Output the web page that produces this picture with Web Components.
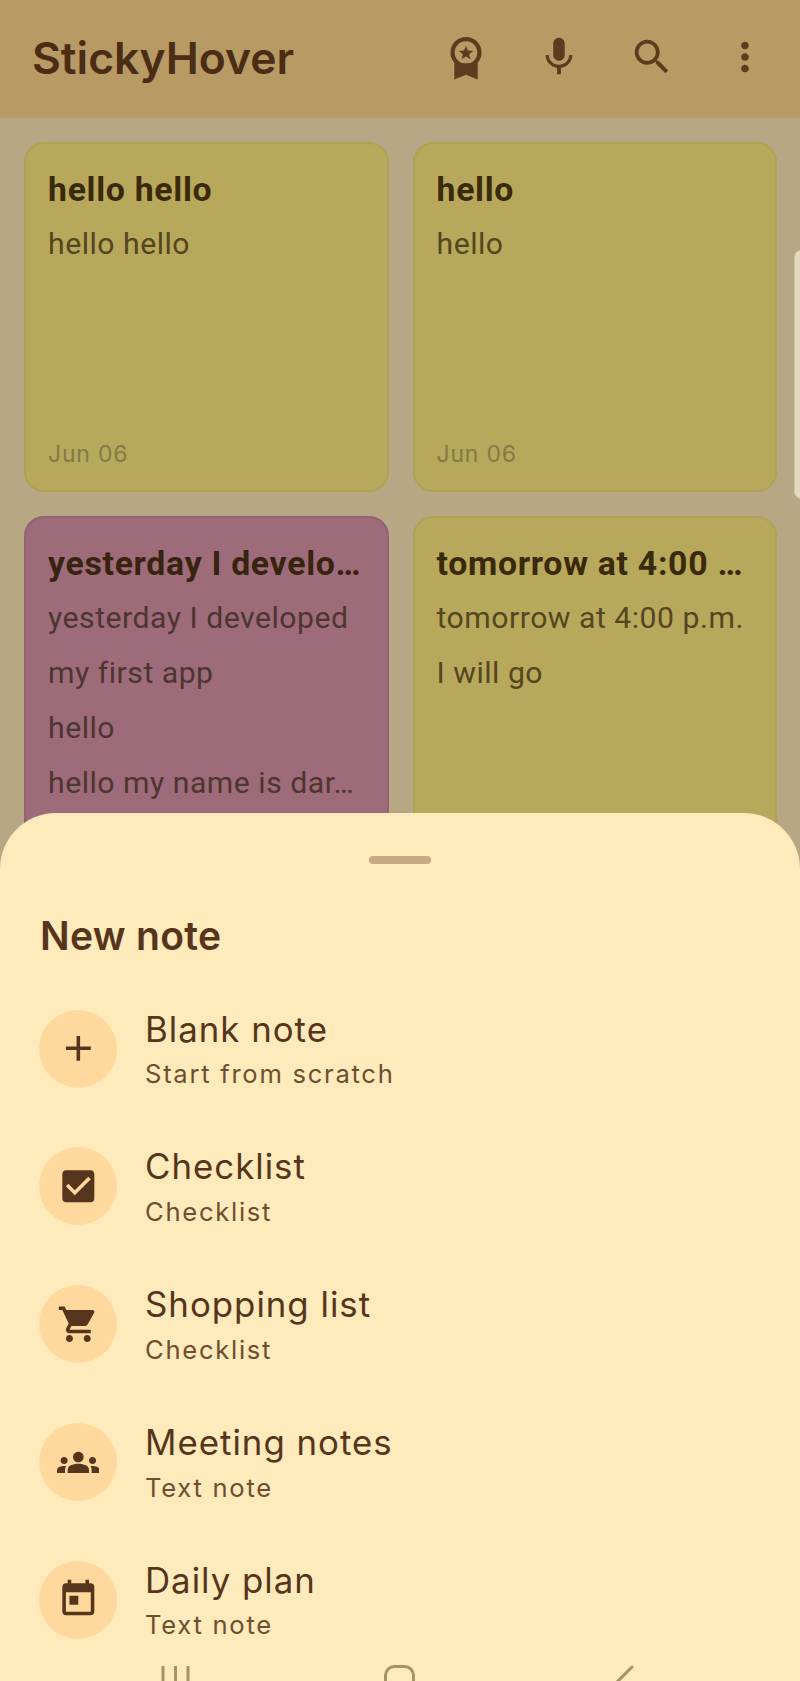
<!DOCTYPE html>
<html><head><meta charset="utf-8">
<style>html,body{margin:0;padding:0;background:#B7A784}</style>
</head><body>
<sticky-app>
  <top-bar slot="bar" title-text="StickyHover"></top-bar>
  <note-grid slot="content">
    <note-card title-text="hello hello" date="Jun 06"><div>hello hello</div></note-card>
    <note-card title-text="hello" date="Jun 06"><div>hello</div></note-card>
    <note-card tone="pink" title-text="yesterday I develo…"><div>yesterday I developed</div><div>my first app</div><div>hello</div><div>hello my name is dar…</div></note-card>
    <note-card title-text="tomorrow at 4:00 …"><div>tomorrow at 4:00 p.m.</div><div>I will go</div></note-card>
  </note-grid>
  <new-note-sheet slot="sheet" heading="New note">
    <sheet-item icon="add" label="Blank note" sub="Start from scratch"></sheet-item>
    <sheet-item icon="check" label="Checklist" sub="Checklist"></sheet-item>
    <sheet-item icon="cart" label="Shopping list" sub="Checklist"></sheet-item>
    <sheet-item icon="groups" label="Meeting notes" sub="Text note"></sheet-item>
    <sheet-item icon="today" label="Daily plan" sub="Text note"></sheet-item>
  </new-note-sheet>
  <nav-hint slot="nav"></nav-hint>
</sticky-app>
<script>
const ICONS={
 mic:'<path d="M12 14c1.66 0 2.99-1.34 2.99-3L15 5c0-1.66-1.34-3-3-3S9 3.34 9 5v6c0 1.66 1.34 3 3 3zm5.3-3c0 3-2.54 5.1-5.3 5.1S6.7 14 6.7 11H5c0 3.41 2.72 6.23 6 6.72V21h2v-3.28c3.28-.48 6-3.3 6-6.72h-1.7z"/>',
 search:'<path d="M15.5 14h-.79l-.28-.27C15.41 12.59 16 11.11 16 9.5 16 5.91 13.09 3 9.5 3S3 5.91 3 9.5 5.91 16 9.5 16c1.61 0 3.09-.59 4.23-1.57l.27.28v.79l5 4.99L20.49 19l-4.99-5zm-6 0C7.01 14 5 11.99 5 9.5S7.01 5 9.5 5 14 7.01 14 9.5 11.99 14 9.5 14z"/>',
 more:'<path d="M12 8c1.1 0 2-.9 2-2s-.9-2-2-2-2 .9-2 2 .9 2 2 2zm0 2c-1.1 0-2 .9-2 2s.9 2 2 2 2-.9 2-2-.9-2-2-2zm0 6c-1.1 0-2 .9-2 2s.9 2 2 2 2-.9 2-2-.9-2-2-2z"/>',
 add:'<path d="M19 13h-6v6h-2v-6H5v-2h6V5h2v6h6v2z"/>',
 check:'<path d="M19 3H5c-1.11 0-2 .9-2 2v14c0 1.1.89 2 2 2h14c1.11 0 2-.9 2-2V5c0-1.1-.89-2-2-2zm-9 14l-5-5 1.41-1.41L10 14.17l7.59-7.59L19 8l-9 9z"/>',
 cart:'<path d="M7 18c-1.1 0-1.99.9-1.99 2S5.9 22 7 22s2-.9 2-2-.9-2-2-2zM1 2v2h2l3.6 7.59-1.35 2.45c-.16.28-.25.61-.25.96 0 1.1.9 2 2 2h12v-2H7.42c-.14 0-.25-.11-.25-.25l.03-.12.9-1.63h7.45c.75 0 1.41-.41 1.75-1.03l3.58-6.49c.08-.14.12-.31.12-.48 0-.55-.45-1-1-1H5.21l-.94-2H1zm16 16c-1.1 0-1.99.9-1.99 2s.89 2 1.99 2 2-.9 2-2-.9-2-2-2z"/>',
 groups:'<path d="M12 12.75c1.63 0 3.07.39 4.24.9 1.08.48 1.76 1.56 1.76 2.73V18H6v-1.61c0-1.18.68-2.26 1.76-2.73 1.17-.52 2.61-.91 4.24-.91zM4 13c1.1 0 2-.9 2-2s-.9-2-2-2-2 .9-2 2 .9 2 2 2zm1.13 1.1c-.37-.06-.74-.1-1.13-.1-.99 0-1.93.21-2.78.58C.48 14.9 0 15.62 0 16.43V18h4.5v-1.61c0-.83.23-1.61.63-2.29zM20 13c1.1 0 2-.9 2-2s-.9-2-2-2-2 .9-2 2 .9 2 2 2zm4 3.43c0-.81-.48-1.53-1.22-1.85-.85-.37-1.79-.58-2.78-.58-.39 0-.76.04-1.13.1.4.68.63 1.46.63 2.29V18H24v-1.57zM12 6c1.66 0 3 1.34 3 3s-1.34 3-3 3-3-1.34-3-3 1.34-3 3-3z"/>',
 today:'<path d="M19 3h-1V1h-2v2H8V1H6v2H5c-1.11 0-1.99.9-1.99 2L3 19c0 1.1.89 2 2 2h14c1.1 0 2-.9 2-2V5c0-1.1-.9-2-2-2zm0 16H5V8h14v11zM7 10h5v5H7z"/>',
 badge:'<path fill-rule="evenodd" d="M12 1.6a8.1 8.1 0 1 1 0 16.2 8.1 8.1 0 0 1 0-16.2zm0 2.2a5.9 5.9 0 1 0 0 11.8 5.9 5.9 0 0 0 0-11.8z"/><path d="M12 6.1l1 2.55 2.75.17-2.13 1.75.7 2.66L12 11.75l-2.32 1.48.7-2.66-2.13-1.75L11 8.65z"/><path d="M5.9 15.2h12.2v8.6L12 21.2l-6.1 2.6z"/>'
};
class UiIcon extends HTMLElement{
  connectedCallback(){
    const s=this.attachShadow({mode:'open'});
    s.innerHTML=`<style>:host{display:block;width:var(--icon,46px);height:var(--icon,46px);line-height:0}svg{width:100%;height:100%;fill:currentColor;display:block}</style><svg viewBox="0 0 24 24">${ICONS[this.getAttribute('name')]}</svg>`;
  }
}
customElements.define('ui-icon',UiIcon);

class StickyApp extends HTMLElement{
  constructor(){super();this.attachShadow({mode:'open'}).innerHTML=`<style>
  :host{display:block;position:relative;width:800px;height:1681px;overflow:hidden;background:#B7A784}
  .edge{position:absolute;top:250px;right:-8px;width:14px;height:249px;border:1px solid #CFC4A0;border-radius:8px;background:#E2D9C1;box-sizing:border-box}
  </style><slot name="bar"></slot><slot name="content"></slot><div class="edge"></div><slot name="sheet"></slot><slot name="nav"></slot>`;}
}
customElements.define('sticky-app',StickyApp);

class TopBar extends HTMLElement{
  connectedCallback(){
    const s=this.attachShadow({mode:'open'});
    s.innerHTML=`<style>
    :host{display:flex;align-items:center;height:118px;background:#B89A65;color:#5E3B1F;padding:0 9px 4px 32px;box-sizing:border-box}
    h1{margin:2px 0 0;flex:1;font:600 44.4px/1 Inter,sans-serif;color:#4A2D14}
    .btn{width:93px;display:flex;justify-content:center}
    </style><h1>${this.getAttribute('title-text')}</h1>
    <div class="btn"><ui-icon name="badge"></ui-icon></div><div class="btn"><ui-icon name="mic"></ui-icon></div><div class="btn"><ui-icon name="search"></ui-icon></div><div class="btn"><ui-icon name="more"></ui-icon></div>`;
  }
}
customElements.define('top-bar',TopBar);

class NoteGrid extends HTMLElement{
  constructor(){super();this.attachShadow({mode:'open'}).innerHTML=`<style>
  :host{display:grid;grid-template-columns:1fr 1fr;gap:24px;padding:24px 23px 24px 24px}
  </style><slot></slot>`;}
}
customElements.define('note-grid',NoteGrid);

class NoteCard extends HTMLElement{
  connectedCallback(){
    const s=this.attachShadow({mode:'open'});
    const date=this.getAttribute('date');
    s.innerHTML=`<style>
    :host{display:flex;flex-direction:column;height:350px;box-sizing:border-box;border:2px solid #B1A154;border-radius:20px;background:#B8A85B;padding:24px 22px 22px;color:#54461F}
    :host([tone=pink]){background:#9E6B7B;border-color:#946373;color:#4D3530}
    h2{margin:0 0 4px;font:700 33.8px/44px Roboto,sans-serif;letter-spacing:.7px;color:#3A2A0C;white-space:nowrap}
    :host([tone=pink]) h2{color:#38230F}
    .body{flex:1;font:400 30.2px/55px Roboto,sans-serif;letter-spacing:.5px;white-space:nowrap}
    .date{font:400 23px/28px Inter,sans-serif;letter-spacing:.8px;color:#857A45}
    </style><h2>${this.getAttribute('title-text')}</h2><div class="body"><slot></slot></div>${date?`<div class="date">${date}</div>`:''}`;
  }
}
customElements.define('note-card',NoteCard);

class NewNoteSheet extends HTMLElement{
  connectedCallback(){
    const s=this.attachShadow({mode:'open'});
    s.innerHTML=`<style>
    :host{display:block;position:absolute;left:0;right:0;top:813px;bottom:0;background:#FFEABB;border-radius:56px 56px 0 0;overflow:hidden}
    .handle{width:62px;height:8px;border-radius:4px;background:#C5AA82;margin:43px auto 0}
    h3{margin:48px 0 0 40px;font:600 39.1px/48px Inter,sans-serif;letter-spacing:.3px;color:#55351B}
    .list{margin-top:49.5px;padding:0 39px}
    </style><div class="handle"></div><h3>${this.getAttribute('heading')}</h3><div class="list"><slot></slot></div>`;
  }
}
customElements.define('new-note-sheet',NewNoteSheet);

class SheetItem extends HTMLElement{
  connectedCallback(){
    const s=this.attachShadow({mode:'open'});
    s.innerHTML=`<style>
    :host{display:flex;align-items:center;gap:28px;height:78px;margin-bottom:59.8px}
    .c{width:78px;height:78px;border-radius:50%;background:#FFD89E;color:#55351B;display:flex;align-items:center;justify-content:center;--icon:42.67px;flex:none}
    .t{padding-top:.8px}
    .l{font:400 34.8px/44px Inter,sans-serif;letter-spacing:1px;color:#55351B}
    .s{margin-top:6.8px;font:400 25.6px/34px Inter,sans-serif;letter-spacing:1.72px;color:#6E4E30}
    </style><div class="c"><ui-icon name="${this.getAttribute('icon')}"></ui-icon></div><div class="t"><div class="l">${this.getAttribute('label')}</div><div class="s">${this.getAttribute('sub')}</div></div>`;
  }
}
customElements.define('sheet-item',SheetItem);

class NavHint extends HTMLElement{
  constructor(){super();this.attachShadow({mode:'open'}).innerHTML=`<style>
  :host{display:block;position:absolute;left:0;right:0;bottom:0;height:16px;overflow:hidden;line-height:0}
  svg{display:block;width:800px;height:16px;fill:none;stroke:#A39468;stroke-width:3}
  </style><svg viewBox="0 0 800 16"><path d="M163 1v20M175.500 1v20M188 1v20"/><rect x="385.500" y="1.500" width="28" height="30" rx="9"/><path d="M632 2 L612 22" stroke-linecap="round"/></svg>`;}
}
customElements.define('nav-hint',NavHint);
</script>
</body></html>
